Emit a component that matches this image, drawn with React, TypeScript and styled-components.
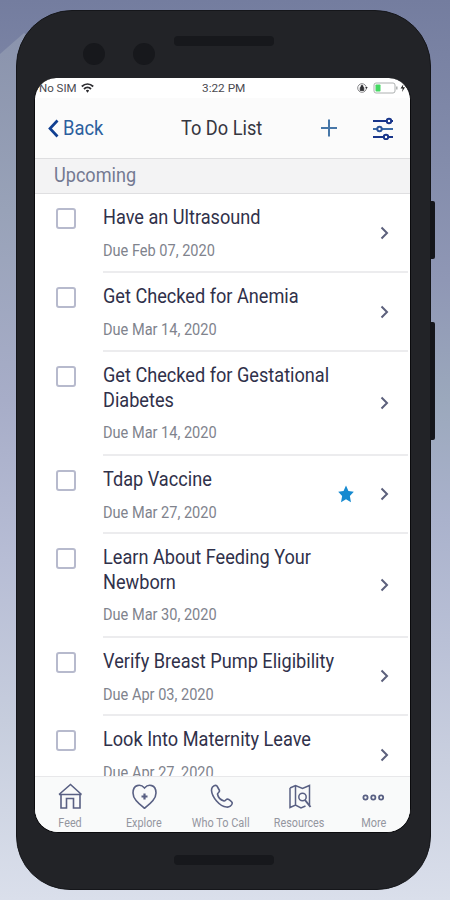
import React from "react";
import styled, { createGlobalStyle } from "styled-components";

const GlobalStyle = createGlobalStyle`
  * { box-sizing: border-box; }
  body { margin: 0; font-family: Roboto, "Liberation Sans", sans-serif; }
`;

const Backdrop = styled.div`
  position: relative;
  width: 450px;
  height: 900px;
  overflow: hidden;
  padding: 10px 0 0 16px;
  background: linear-gradient(180deg, #747d9f 0, #838cab 160px, #8f97b5 280px, #9ba8bc 400px, #aab2cc 520px, #b9c0d6 640px, #c9cfdf 760px, #dadfeb 900px);
`;

const Beam = styled.div`
  position: absolute;
  left: 0;
  top: 0;
  width: 60px;
  height: 900px;
  clip-path: polygon(0 54px, 24px 33px, 60px 60px, 60px 900px, 0 900px);
  background: linear-gradient(180deg, #8b94ad 40px, #98a2b8 210px, #a7adc8 400px, #b7bdd5 560px, #c6cddd 720px, #dadfeb 900px);
`;

const SideKey = styled.div<{ $top: number; $height: number }>`
  position: absolute;
  left: 427px;
  top: ${(p) => p.$top}px;
  width: 8px;
  height: ${(p) => p.$height}px;
  border-radius: 0 2px 2px 0;
  background: #15161b;
`;

const Phone = styled.div`
  position: relative;
  width: 415px;
  height: 880px;
  padding: 67px 0 0 17px;
  border: 1px solid #15161a;
  border-radius: 56px 56px 54px 54px;
  background: #222327;
`;

const Dot = styled.div<{ $left: number }>`
  position: absolute;
  left: ${(p) => p.$left}px;
  top: 32px;
  width: 22px;
  height: 22px;
  border-radius: 50%;
  background: #17181c;
`;

const Slot = styled.div<{ $top: number }>`
  position: absolute;
  left: 157px;
  top: ${(p) => p.$top}px;
  width: 100px;
  height: 10px;
  border-radius: 4px;
  background: #17181c;
`;

const Screen = styled.div`
  width: 377px;
  height: 755px;
  display: flex;
  flex-direction: column;
  overflow: hidden;
  border-radius: 22px 22px 24px 24px;
  border: 1px solid #0b0b0e;
  border-top-width: 0;
  background: #fff;
`;

const StatusBar = styled.div`
  flex: none;
  height: 20px;
  display: grid;
  grid-template-columns: 163px 1fr auto;
  align-items: center;
  padding: 0 0 0 4px;
  color: #4a4a50;
`;

const StatusGroup = styled.div`
  display: flex;
  align-items: center;
  gap: 4px;
`;

const NavBar = styled.div`
  flex: none;
  height: 61px;
  display: grid;
  grid-template-columns: 133px 140px 51px 22px;
  align-items: center;
  padding: 0 0 0 13px;
  background: #fbfbfb;
  border-bottom: 1px solid #dedee0;
  color: #35363f;
`;

const BackButton = styled.div`
  display: flex;
  align-items: center;
  gap: 4px;
  color: #2c5f9e;
`;

const SectionTitle = styled.div`
  flex: none;
  height: 35px;
  padding: 0 0 2px 19px;
  display: flex;
  align-items: center;
  background: #f3f3f4;
  border-bottom: 1px solid #dfdfe1;
  color: #737a92;
`;

const Label = styled.span<{ $size: number; $scale: number; $line?: number; $weight?: number }>`
  display: block;
  white-space: nowrap;
  transform: scaleX(${(p) => p.$scale});
  transform-origin: left center;
  font-size: ${(p) => p.$size}px;
  line-height: ${(p) => p.$line ?? 24}px;
  font-weight: ${(p) => p.$weight ?? 400};
`;

const List = styled.div`
  flex: 1;
  min-height: 0;
  overflow: hidden;
`;

const Row = styled.div<{ $height: number }>`
  height: ${(p) => p.$height}px;
  display: grid;
  grid-template-columns: 68px 1fr;
  padding-right: 2px;
`;

const CheckBox = styled.div`
  width: 20px;
  height: 21px;
  margin: 14px 0 0 21px;
  border: 2px solid #b7bacd;
  border-radius: 3px;
  background: #fff;
`;

const RowBody = styled.div`
  display: flex;
  align-items: center;
  border-bottom: 2px solid #ececee;
`;

const RowText = styled.div`
  align-self: flex-start;
  flex: 1;
  min-width: 0;
  padding-top: 11px;
  color: #30314a;
`;

const Due = styled.div`
  margin-top: 9px;
  color: #80838d;
`;

const RowIcons = styled.div`
  display: flex;
  align-items: center;
  gap: 26px;
  padding-right: 19px;
`;

const TabBar = styled.div`
  flex: none;
  height: 56px;
  display: grid;
  grid-template-columns: 70px 77px 78px 79px 69px;
  background: #f9fafa;
  border-top: 1px solid #e8e8ea;
`;

const Tab = styled.div`
  display: flex;
  flex-direction: column;
  align-items: center;
  color: #94969f;

  svg {
    margin-top: 4px;
  }
`;

const TabLabel = styled.span<{ $scale: number }>`
  margin-top: 6.500px;
  font-size: 12px;
  line-height: 14px;
  white-space: nowrap;
  transform: scaleX(${(p) => p.$scale});
`;

const ink = "#596083";

type Task = { title: string[]; due: string; height: number; star?: boolean };
const tasks: Task[] = [
  { title: ["Have an Ultrasound"], due: "Due Feb 07, 2020", height: 79 },
  { title: ["Get Checked for Anemia"], due: "Due Mar 14, 2020", height: 79 },
  { title: ["Get Checked for Gestational", "Diabetes"], due: "Due Mar 14, 2020", height: 104 },
  { title: ["Tdap Vaccine"], due: "Due Mar 27, 2020", height: 78, star: true },
  { title: ["Learn About Feeding Your", "Newborn"], due: "Due Mar 30, 2020", height: 104 },
  { title: ["Verify Breast Pump Eligibility"], due: "Due Apr 03, 2020", height: 78 },
  { title: ["Look Into Maternity Leave"], due: "Due Apr 27, 2020", height: 79 },
];

const Chevron = () => (
  <svg width="9" height="14" viewBox="0 0 9 14" fill="none" stroke="#5c607c" strokeWidth="2">
    <path d="M1.500 1.500 7 7l-5.500 5.500" />
  </svg>
);

const Star = () => (
  <svg width="16" height="18" viewBox="0 0 17 18" preserveAspectRatio="none" fill="#168ad0">
    <path d="M8.500.5l2.600 5.400 5.700.8-4.200 4.200 1.200 6.300-5.300-2.900-5.300 2.900 1.200-6.300L.2 6.700l5.700-.8z" />
  </svg>
);

const icons = {
  feed: (
    <svg width="26" height="28" viewBox="0 0 26 28" fill="none" stroke={ink} strokeWidth="1.600">
      <path d="M2 13.500 13.500 3.500l11 10M2 13.500h22.500M4 14v13h5.500v-9.500h7V27h6.500V14" />
    </svg>
  ),
  explore: (
    <svg width="26" height="28" viewBox="0 0 26 28" fill="none" stroke={ink} strokeWidth="1.600">
      <path d="M13.500 27.300C8.500 23 2 18.500 2 12 2 3.500 9.500 2.500 13.500 7 17.500 2.500 25 3.500 25 12c0 6.500-6.500 11-11.500 15.300z" />
      <path d="M13.500 12.500v6M10.500 15.500h6" strokeWidth="2.200" />
    </svg>
  ),
  call: (
    <svg width="26" height="28" viewBox="0 0 26 28" fill="none" stroke={ink} strokeWidth="1.600" strokeLinejoin="round">
      <path d="M4.500 6C6 4.500 8 4 9 5l2.500 4.500c.5 1.500-2 2.500-2 3.500.5 3 3.500 6 6.500 7 1.500.2 2-2 3.500-2 1.500.2 4.500 2.500 4.800 4-.3 2.500-3 4.500-5.800 4C11.500 25.500 4 16 3.500 9.500c0-1.500.2-2.500 1-3.500z" />
    </svg>
  ),
  resources: (
    <svg width="26" height="28" viewBox="0 0 26 28" fill="none" stroke={ink} strokeWidth="1.500">
      <path d="M3 7 8.500 4.500l7 3 7-3v20M3 7v19.500L8.500 24l5.500 3 4.500-2M8.500 4.500V24" />
      <circle cx="15.500" cy="16" r="3.700" />
      <path d="m18 19 5.500 7" strokeWidth="2" />
    </svg>
  ),
  more: (
    <svg width="26" height="28" viewBox="0 0 26 28" fill="none" stroke={ink} strokeWidth="1.800">
      <circle cx="4.500" cy="16.500" r="2.100" />
      <circle cx="12.300" cy="16.500" r="2.100" />
      <circle cx="20.100" cy="16.500" r="2.100" />
    </svg>
  ),
};

const tabs: { icon: keyof typeof icons; label: string; scale: number }[] = [
  { icon: "feed", label: "Feed", scale: 0.9 },
  { icon: "explore", label: "Explore", scale: 0.9 },
  { icon: "call", label: "Who To Call", scale: 0.91 },
  { icon: "resources", label: "Resources", scale: 0.9 },
  { icon: "more", label: "More", scale: 0.91 },
];

export default function App() {
  return (
    <>
      <GlobalStyle />
      <Backdrop>
        <Beam />
        <SideKey $top={201} $height={58} />
        <SideKey $top={322} $height={118} />
        <Phone>
          <Dot $left={66} />
          <Dot $left={116} />
          <Slot $top={25} />
          <Slot $top={844} />
          <Screen>
            <StatusBar>
              <StatusGroup>
                <Label $size={11.5} $scale={1} $line={20}>No SIM</Label>
                <svg width="13" height="10" viewBox="0 0 13 10" fill="none" stroke="#2c2c30" strokeWidth="1.800">
                  <path d="M.8 3.500c3.400-3.300 8-3.300 11.400 0M3 6c2-2 5-2 7 0" />
                  <path d="M4.800 7.600c1-1 2.400-1 3.400 0L6.500 9.800z" fill="#2c2c30" stroke="none" />
                </svg>
              </StatusGroup>
              <Label $size={11.8} $scale={1} $line={20}>3:22 PM</Label>
              <svg width="53" height="12" viewBox="0 0 53 12" fill="none">
                <circle cx="5" cy="6" r="4.300" stroke="#88888b" strokeWidth="1" />
                <path d="M3.200 5.500h3.600v3H3.200zM4 5.500V4.200a1 1 0 0 1 2 0v1.300" fill="#303034" stroke="#303034" strokeWidth=".8" />
                <path d="M8.300 5h2.400L9.500 7z" fill="#303034" />
                <rect x="17" y="1" width="21" height="10" rx="2" stroke="#adb0b0" />
                <rect x="18.500" y="2.500" width="5" height="7" rx=".8" fill="#45d862" />
                <path d="M39.800 4.500v3" stroke="#adb0b0" strokeWidth="1.500" />
                <path d="M46.500 2 43.500 6.500h2.200L45 10l3-4.800h-2.200z" fill="#222" />
              </svg>
            </StatusBar>
            <NavBar>
              <BackButton>
                <svg width="11" height="19" viewBox="0 0 11 19" fill="none" stroke="#103f91" strokeWidth="2.700">
                  <path d="M9.500 1.500 2 9.500l7.500 8" />
                </svg>
                <Label $size={20} $scale={0.92}>Back</Label>
              </BackButton>
              <Label $size={20} $scale={0.91}>To Do List</Label>
              <svg width="16" height="18" viewBox="0 0 16 18" stroke="#4777a8" strokeWidth="2">
                <path d="M8 .5v17M0 9h16" />
              </svg>
              <svg width="22" height="23" viewBox="0 0 22 23" fill="#fff" stroke="#18358a" strokeWidth="2">
                <path d="M1 4h20M1 20h20" />
                <path d="M1 12h20" stroke="#3d6da8" />
                <circle cx="17" cy="4" r="2.200" />
                <circle cx="7.500" cy="12" r="2.200" stroke="#2b559b" />
                <circle cx="14" cy="20" r="2.200" />
              </svg>
            </NavBar>
            <SectionTitle>
              <Label $size={20} $scale={0.905}>Upcoming</Label>
            </SectionTitle>
            <List>
              {tasks.map((t) => (
                <Row key={t.title[0]} $height={t.height}>
                  <CheckBox />
                  <RowBody>
                    <RowText>
                      {t.title.map((line) => (
                        <Label key={line} $size={20} $scale={0.907} $line={24.5}>{line}</Label>
                      ))}
                      <Due>
                        <Label $size={16} $scale={0.91}>{t.due}</Label>
                      </Due>
                    </RowText>
                    <RowIcons>
                      {t.star && <Star />}
                      <Chevron />
                    </RowIcons>
                  </RowBody>
                </Row>
              ))}
            </List>
            <TabBar>
              {tabs.map((t) => (
                <Tab key={t.label}>
                  {icons[t.icon]}
                  <TabLabel $scale={t.scale}>{t.label}</TabLabel>
                </Tab>
              ))}
            </TabBar>
          </Screen>
        </Phone>
      </Backdrop>
    </>
  );
}
